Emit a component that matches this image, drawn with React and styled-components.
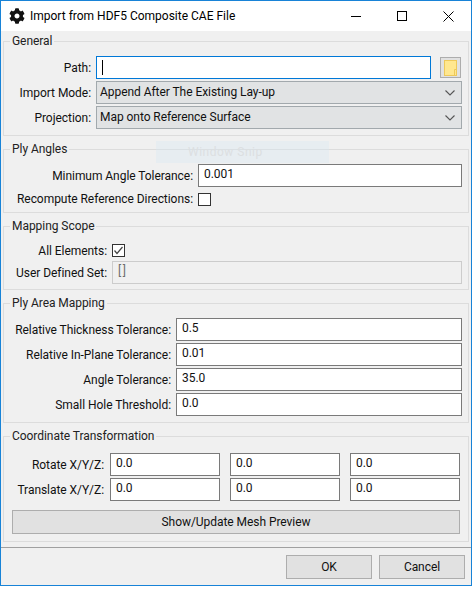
import React from "react";
import styled, { createGlobalStyle } from "styled-components";
import { FaCog } from "react-icons/fa";

const Global = createGlobalStyle`
  html, body { margin: 0; padding: 0; background: #fff; }
  body { font-family: Roboto, "Noto Sans", sans-serif; font-size: 12px; letter-spacing: -0.05px; color: #000; }
  * { box-sizing: border-box; }
`;

const Window = styled.div`
  position: relative;
  width: 472px;
  height: 586px;
  border: 1px solid #1883d7;
  display: flex;
  flex-direction: column;
  background: #f0f0f0;
`;

const TitleBar = styled.div`
  height: 30px;
  background: #fff;
  display: flex;
  align-items: center;
  padding-left: 8px;
  flex: none;
`;

const TitleText = styled.div`
  margin-left: 5px;
  font-size: 12px;
  letter-spacing: 0;
  flex: 1;
`;

const WinButton = styled.div`
  width: 46px;
  height: 30px;
  display: flex;
  align-items: center;
  justify-content: center;
`;

const Body = styled.div`
  flex: 1;
  padding: 2px 2px 0;
  display: flex;
  flex-direction: column;
  gap: 5px;
`;

const Group = styled.fieldset`
  margin: 0;
  padding: ${p => p.$pt ?? 7}px ${p => p.$pr ?? 6}px 0 8px;
  border: 1px solid #dcdcdc;
  height: ${p => p.$h}px;
  min-width: 0;
`;

const Legend = styled.legend`
  margin-left: -2px;
  padding: 0 2px;
  height: 16px;
  line-height: 16px;
  color: #222;
`;

const Form = styled.div`
  display: grid;
  grid-template-columns: ${p => p.$label}px 1fr;
  column-gap: 5px;
  row-gap: ${p => p.$gap ?? 2}px;
  align-items: center;
`;

const Label = styled.div`
  text-align: right;
  white-space: nowrap;
  line-height: 16px;
  color: #111;
`;

const TextBox = styled.div`
  position: relative;
  height: 23px;
  min-width: 0;
  border: 1px solid ${p => (p.$focus ? "#0078d7" : p.$disabled ? "#cccccc" : "#7a7a7a")};
  background: ${p => (p.$disabled ? "#f0f0f0" : "#fff")};
  color: ${p => (p.$disabled ? "#6d6d6d" : "#111")};
  padding: 0 5px;
  line-height: 19px;
  white-space: nowrap;
  letter-spacing: ${p => (p.$disabled ? "1.5px" : "inherit")};
`;

const Caret = styled.span`
  position: absolute;
  left: 5px;
  top: 3px;
  width: 1px;
  height: 15px;
  background: #000;
`;

const PathRow = styled.div`
  display: flex;
  align-items: center;
  gap: 9px;
`;

const PathBox = styled(TextBox)`
  flex: 1;
`;

const FolderButton = styled.div`
  width: 21px;
  height: 21px;
  border: 1px solid #adadad;
  background: #e1e1e1;
  display: flex;
  align-items: center;
  justify-content: center;
  flex: none;
  margin-right: 1px;
`;

const Combo = styled.div`
  height: 23px;
  border: 1px solid #a2a9ad;
  background: #e1e3e4;
  padding: 0 4px 0 3px;
  display: flex;
  align-items: center;
  justify-content: space-between;
  color: #111;
  line-height: 19px;
`;

const CheckRow = styled.div`
  height: ${p => p.$h ?? 15}px;
  display: flex;
  align-items: center;
`;

const Check = styled.div`
  width: 13px;
  height: 13px;
  border: 1px solid #333;
  background: #fff;
  display: flex;
  align-items: center;
  justify-content: center;
`;

const CoordForm = styled.div`
  display: grid;
  grid-template-columns: 88px 110px 110px 110px;
  column-gap: 10px;
  row-gap: 2px;
  align-items: center;
`;

const CoordLabel = styled(Label)`
  margin-right: -4px;
`;

const CoordInputs = styled.div`
  display: contents;
`;

const PreviewButton = styled.button`
  display: block;
  width: 448px;
  height: 24px;
  margin-top: 9px;
  padding: 0;
  border: 1px solid #adadad;
  background: #e1e1e1;
  font: inherit;
  letter-spacing: inherit;
  color: #111;
`;

const Footer = styled.div`
  flex: none;
  height: 38px;
  border-top: 1px solid #a0a0a0;
  display: flex;
  justify-content: flex-end;
  align-items: flex-start;
  gap: 7px;
  padding: 7px 6px 0 0;
`;

const FooterButton = styled.button`
  width: 86px;
  height: 24px;
  padding: 0;
  border: 1px solid #adadad;
  background: #e1e1e1;
  font: inherit;
  letter-spacing: inherit;
  color: #111;
`;

const Snip = styled.div`
  position: absolute;
  left: 155px;
  top: 140px;
  width: 173px;
  height: 22px;
  padding-left: 32px;
  background: rgba(214, 232, 244, 0.35);
  color: #dcdfe1;
  line-height: 23px;
  letter-spacing: 0.5px;
`;

const Chevron = () => (
  <svg width="10" height="6" viewBox="0 0 10 6" style={{ marginRight: 2 }}>
    <path d="M0.5 0.5 L5 5 L9.5 0.5" fill="none" stroke="#555" strokeWidth="1.1" />
  </svg>
);

const Folder = () => (
  <svg width="13" height="16" viewBox="0 0 13 16">
    <rect x="0.5" y="0.5" width="12" height="15" fill="#ffe78f" stroke="#eec95a" />
    <path d="M10.5 15 V9.5 H12.5" fill="none" stroke="#eec95a" />
  </svg>
);

const Tick = () => (
  <svg width="11" height="11" viewBox="0 0 11 11">
    <path d="M1.5 5.5 L4 8.5 L9.5 2" fill="none" stroke="#444" strokeWidth="1.2" />
  </svg>
);

const coords = [
  ["Rotate X/Y/Z:", ["0.0", "0.0", "0.0"]],
  ["Translate X/Y/Z:", ["0.0", "0.0", "0.0"]],
];

const areaRows = [
  ["Relative Thickness Tolerance:", "0.5"],
  ["Relative In-Plane Tolerance:", "0.01"],
  ["Angle Tolerance:", "35.0"],
  ["Small Hole Threshold:", "0.0"],
];

export default function App() {
  return (
    <>
      <Global />
      <Window>
        <TitleBar>
          <FaCog size={16} color="#111" />
          <TitleText>Import from HDF5 Composite CAE File</TitleText>
          <WinButton>
            <svg width="10" height="10" viewBox="0 0 10 10"><path d="M0 5.5H10" stroke="#000" /></svg>
          </WinButton>
          <WinButton>
            <svg width="10" height="10" viewBox="0 0 10 10"><rect x="0.5" y="0.5" width="9" height="9" fill="none" stroke="#000" /></svg>
          </WinButton>
          <WinButton>
            <svg width="11" height="11" viewBox="0 0 11 11"><path d="M0.5 0.5L10.5 10.5M10.5 0.5L0.5 10.5" stroke="#000" /></svg>
          </WinButton>
        </TitleBar>
        <Body>
          <Group $h={103}>
            <Legend>General</Legend>
            <Form $label={79}>
              <Label>Path:</Label>
              <PathRow>
                <PathBox $focus><Caret /></PathBox>
                <FolderButton><Folder /></FolderButton>
              </PathRow>
              <Label>Import Mode:</Label>
              <Combo>Append After The Existing Lay-up<Chevron /></Combo>
              <Label>Projection:</Label>
              <Combo>Map onto Reference Surface<Chevron /></Combo>
            </Form>
          </Group>
          <Group $h={72}>
            <Legend>Ply Angles</Legend>
            <Form $label={181} $gap={4}>
              <Label>Minimum Angle Tolerance:</Label>
              <TextBox>0.001</TextBox>
              <Label>Recompute Reference Directions:</Label>
              <CheckRow><Check /></CheckRow>
            </Form>
          </Group>
          <Group $h={72}>
            <Legend>Mapping Scope</Legend>
            <Form $label={95} $gap={1}>
              <Label>All Elements:</Label>
              <CheckRow $h={19}><Check><Tick /></Check></CheckRow>
              <Label>User Defined Set:</Label>
              <TextBox $disabled>[]</TextBox>
            </Form>
          </Group>
          <Group $h={128}>
            <Legend>Ply Area Mapping</Legend>
            <Form $label={159}>
              {areaRows.map(([label, value]) => (
                <React.Fragment key={label}>
                  <Label>{label}</Label>
                  <TextBox>{value}</TextBox>
                </React.Fragment>
              ))}
            </Form>
          </Group>
          <Group $h={114} $pr={8} $pt={9}>
            <Legend>Coordinate Transformation</Legend>
            <CoordForm>
              {coords.map(([label, values]) => (
                <CoordInputs key={label}>
                  <CoordLabel>{label}</CoordLabel>
                  {values.map((v, i) => <TextBox key={i}>{v}</TextBox>)}
                </CoordInputs>
              ))}
            </CoordForm>
            <PreviewButton>Show/Update Mesh Preview</PreviewButton>
          </Group>
        </Body>
        <Footer>
          <FooterButton>OK</FooterButton>
          <FooterButton>Cancel</FooterButton>
        </Footer>
        <Snip>Window Snip</Snip>
      </Window>
    </>
  );
}
